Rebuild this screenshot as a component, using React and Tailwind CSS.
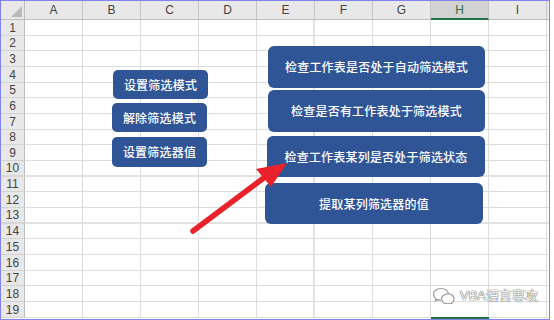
import React from "react";

const cols = ["A", "B", "C", "D", "E", "F", "G", "H", "I"];
const rows = Array.from({ length: 19 }, (_, i) => i + 1);

const buttons = [
  { text: "设置筛选模式", cls: "left-[113px] top-[70px] w-[95px] h-[29px] rounded-[5px]" },
  { text: "解除筛选模式", cls: "left-[112px] top-[103px] w-[95px] h-[29px] rounded-[5px]" },
  { text: "设置筛选器值", cls: "left-[112px] top-[137px] w-[95px] h-[30px] rounded-[5px]" },
  { text: "检查工作表是否处于自动筛选模式", cls: "left-[268px] top-[46px] w-[217px] h-[42px] rounded-[6px]" },
  { text: "检查是否有工作表处于筛选模式", cls: "left-[268px] top-[90px] w-[217px] h-[42px] rounded-[6px]" },
  { text: "检查工作表某列是否处于筛选状态", cls: "left-[267px] top-[136px] w-[218px] h-[41px] rounded-[6px]" },
  { text: "提取某列筛选器的值", cls: "left-[265px] top-[183px] w-[218px] h-[41px] rounded-[6px]" },
];

const HeaderRow = () => (
  <div className="flex h-[19px] border-b border-[#bdbdbd] bg-[#e8e8e8]">
    {/* select-all corner */}
    <div className="relative w-[24px] shrink-0 border-r border-[#bdbdbd]">
      <svg className="absolute right-[2px] bottom-[2px]" width="11" height="11" viewBox="0 0 11 11">
        <polygon points="11,0 11,11 0,11" fill="#b9b9b9" />
      </svg>
    </div>
    {cols.map((c) =>
      c === "H" ? (
        <div
          key={c}
          className="w-[58px] shrink-0 -mb-px flex items-center justify-center border-r border-[#c6c6c6] border-b-2 border-b-[#217346] bg-[#d2d2d2] text-[12px] text-[#2b6e4f]"
        >
          {c}
        </div>
      ) : (
        <div
          key={c}
          className="w-[58px] shrink-0 flex items-center justify-center border-r border-[#c6c6c6] text-[12px] text-[#444]"
        >
          {c}
        </div>
      ),
    )}
    <div className="flex-1" />
  </div>
);

const GridRow = ({ n }) => {
  const h = n % 3 === 2 ? "h-[15px]" : "h-[16px]";
  const thick = n === 10 || n === 13;
  return (
    <div className={`flex ${h}`}>
      <div
        className={`w-[24px] shrink-0 flex items-center justify-center bg-[#e8e8e8] border-r border-[#bdbdbd] text-[12px] leading-none text-[#444] ${
          thick ? "border-b-2 border-b-[#d8d8d8]" : "border-b border-b-[#d4d4d4]"
        }`}
      >
        {n}
      </div>
      {cols.map((c) => (
        <div
          key={c}
          className={`w-[58px] shrink-0 ${c === "E" ? "border-r-2 border-r-[#e2e2e2]" : "border-r border-r-[#dcdcdc]"} ${
            thick ? "border-b-2 border-b-[#e2e2e2]" : "border-b border-b-[#dcdcdc]"
          }`}
        />
      ))}
      <div className={`flex-1 ${thick ? "border-b-2 border-[#e2e2e2]" : "border-b border-[#dcdcdc]"}`} />
    </div>
  );
};

export default function App() {
  return (
    <div className="relative h-[320px] w-[554px] overflow-hidden bg-white font-['Liberation_Sans','Noto_Sans_CJK_SC',sans-serif]">
      <div className="h-[320px] w-[550px] overflow-hidden border border-[#8282f0]">
        <HeaderRow />
        {rows.map((n) => (
          <GridRow key={n} n={n} />
        ))}
      </div>

      {/* active cell border peeking from row 20 */}
      <div className="absolute left-[431px] top-[317px] h-[2px] w-[58px] bg-[#217346]" />

      {/* macro buttons */}
      {buttons.map((b) => (
        <div
          key={b.text}
          className={`absolute flex items-center justify-center bg-[#2f5597] font-['Noto_Sans_CJK_SC',sans-serif] text-[12px] font-medium tracking-[0.2px] text-white ${b.cls}`}
        >
          {b.text}
        </div>
      ))}

      {/* red arrow */}
      <svg className="pointer-events-none absolute left-0 top-0" width="554" height="320">
        <line x1="193" y1="231" x2="265" y2="177" stroke="#e8212b" strokeWidth="5.5" strokeLinecap="round" />
        <polygon points="287,163 256,169 271,187" fill="#e8212b" />
      </svg>

      {/* watermark */}
      <div className="absolute left-[432px] top-[287px] flex items-center gap-[4px]">
        <svg width="24" height="17" viewBox="0 0 24 17">
          <path
            d="M9 1.5C4.6 1.5 1.5 4.2 1.5 7.4c0 1.8 1 3.3 2.5 4.4l-.6 2 2.3-1.2c1 .3 2 .5 3.1.5"
            fill="none"
            stroke="#9a9a9a"
            strokeWidth="1.2"
          />
          <path d="M9 1.5c4.1 0 7.2 2.4 7.5 5.4" fill="none" stroke="#9a9a9a" strokeWidth="1.2" />
          <path
            d="M16 6.8c-3.6 0-6.4 2.3-6.4 5.1s2.8 5 6.4 5c.8 0 1.6-.1 2.3-.4l1.9 1-.5-1.7c1.5-.9 2.4-2.3 2.4-3.9 0-2.8-2.8-5.1-6.1-5.1z"
            fill="#fff"
            stroke="#9a9a9a"
            strokeWidth="1.2"
          />
        </svg>
        <span className="font-['Liberation_Sans','Noto_Sans_CJK_SC',sans-serif] text-[13px] leading-none text-white [text-shadow:0_0_1px_#444,0_0_1px_#444]">
          VBA语言専攻
        </span>
      </div>
    </div>
  );
}
